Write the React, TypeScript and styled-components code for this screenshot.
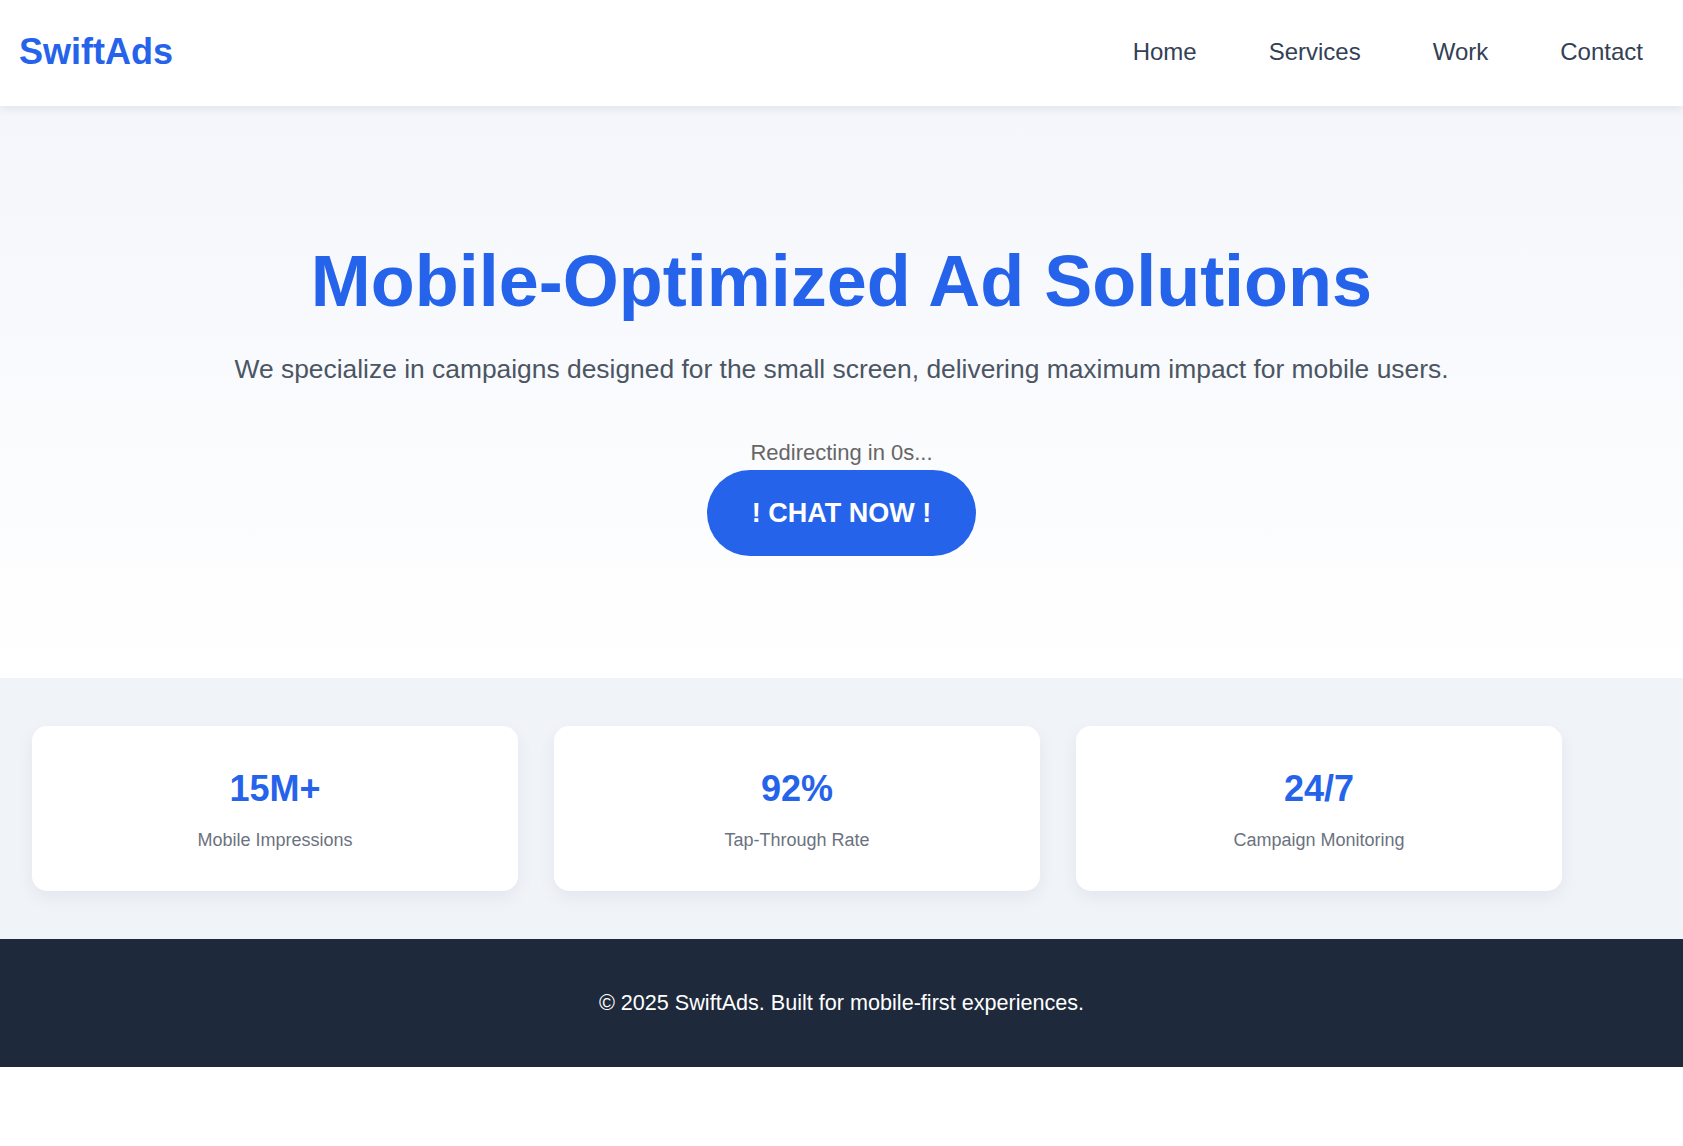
import React from 'react';
import styled, { createGlobalStyle } from 'styled-components';

const GlobalStyle = createGlobalStyle`
  * {
    box-sizing: border-box;
  }

  body {
    margin: 0;
    font-family: "Liberation Sans", Arial, sans-serif;
    line-height: 1.6;
    color: #1f2937;
    background: #fff;
  }
`

const Header = styled.header`
  display: flex;
  align-items: center;
  justify-content: space-between;
  padding: 23px 40px 25px 19px;
  background: #fff;
  box-shadow: 0 3px 9px rgba(0, 0, 0, 0.08);
  position: relative;
  z-index: 1;
`

const Logo = styled.div`
  font-size: 36px;
  font-weight: 700;
  color: #2563eb;
`

const Nav = styled.nav`
  display: flex;
  gap: 72px;
`

const NavLink = styled.a`
  font-size: 24px;
  color: #334155;
  text-decoration: none;
  cursor: pointer;
`

const Hero = styled.section`
  display: flex;
  flex-direction: column;
  align-items: center;
  text-align: center;
  padding: 132px 24px 122px;
  background: linear-gradient(to bottom, #f4f6fb, #ffffff);
`

const Title = styled.h1`
  margin: 0 0 24px;
  font-size: 72px;
  line-height: 1.2;
  font-weight: 700;
  color: #2563eb;
`

const Subtitle = styled.p`
  margin: 0 0 45px;
  font-size: 26.4px;
  color: #4b5563;
`

const Countdown = styled.div`
  font-size: 22px;
  color: #666;
`

const ChatButton = styled.button`
  font-family: inherit;
  font-size: 27px;
  font-weight: 700;
  line-height: 1.15;
  color: #fff;
  background: #2563eb;
  border: none;
  border-radius: 999px;
  padding: 27.5px 45px;
  cursor: pointer;
`

const Stats = styled.section`
  display: grid;
  grid-template-columns: repeat(3, 486px);
  gap: 36px;
  padding: 48px 32px;
  background: #f0f3f8;
`

const Card = styled.div`
  display: flex;
  flex-direction: column;
  align-items: center;
  padding: 42px 20px 40px;
  background: #fff;
  border-radius: 15px;
  box-shadow: 0 6px 18px rgba(15, 23, 42, 0.06);
`

const StatValue = styled.div`
  font-size: 36px;
  font-weight: 700;
  line-height: 1.15;
  color: #2563eb;
  margin-bottom: 20px;
`

const StatLabel = styled.div`
  font-size: 18px;
  line-height: 1.15;
  color: #6b7280;
`

const Footer = styled.footer`
  padding: 47px 24px;
  background: #1e293b;
  color: #fff;
  text-align: center;
  font-size: 21.6px;
`

const stats = [
  { value: '15M+', label: 'Mobile Impressions' },
  { value: '92%', label: 'Tap-Through Rate' },
  { value: '24/7', label: 'Campaign Monitoring' },
]

const App = () => {
  return (
    <>
      <GlobalStyle />
      <Header>
        <Logo>SwiftAds</Logo>
        <Nav>
          <NavLink>Home</NavLink>
          <NavLink>Services</NavLink>
          <NavLink>Work</NavLink>
          <NavLink>Contact</NavLink>
        </Nav>
      </Header>
      <Hero>
        <Title>Mobile-Optimized Ad Solutions</Title>
        <Subtitle>
          We specialize in campaigns designed for the small screen, delivering maximum impact for mobile users.
        </Subtitle>
        <Countdown>Redirecting in 0s...</Countdown>
        <ChatButton>! CHAT NOW !</ChatButton>
      </Hero>
      <Stats>
        {stats.map((s) => (
          <Card key={s.label}>
            <StatValue>{s.value}</StatValue>
            <StatLabel>{s.label}</StatLabel>
          </Card>
        ))}
      </Stats>
      <Footer>© 2025 SwiftAds. Built for mobile-first experiences.</Footer>
    </>
  );
};

export default App;
